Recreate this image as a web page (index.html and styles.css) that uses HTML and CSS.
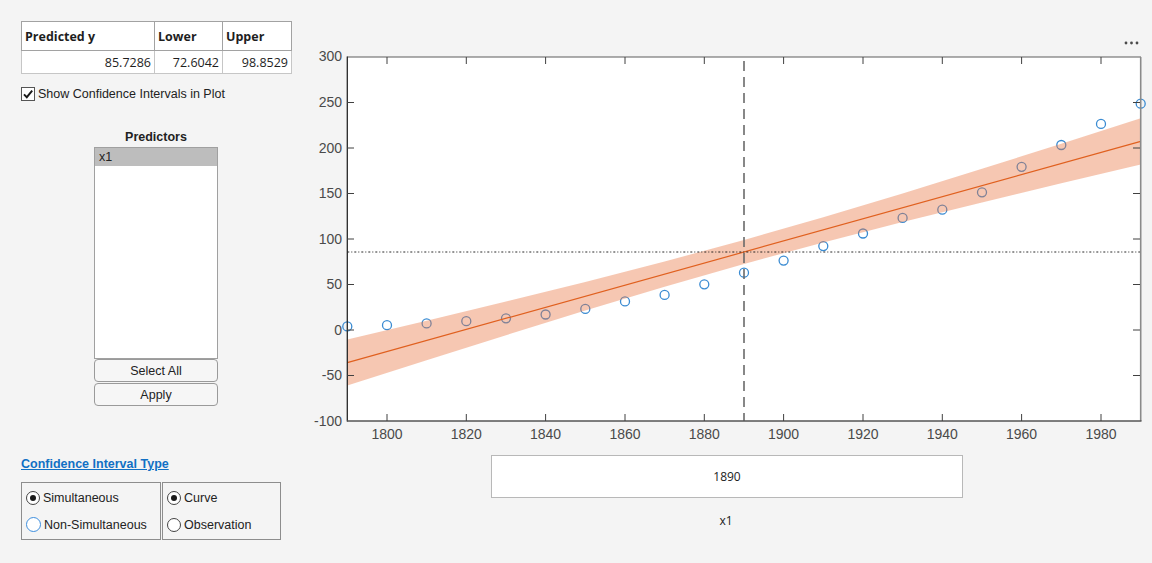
FILE: index.html
```html
<!DOCTYPE html>
<html>
<head>
  <title>Prediction Slice Plot</title>
  <link rel="stylesheet" href="styles.css">
</head>
<body>
<div class="app">

  <div class="side">
    <table class="pred-table">
      <tr><th class="c1">Predicted y</th><th class="c2">Lower</th><th class="c3">Upper</th></tr>
      <tr><td>85.7286</td><td>72.6042</td><td>98.8529</td></tr>
    </table>

    <div class="check-row">
      <span class="check">
        <svg width="12" height="12" viewBox="0 0 12 12"><path d="M2 6.3 L4.8 9.2 L10.2 2.6" fill="none" stroke="#1a1a1a" stroke-width="1.9"/></svg>
      </span>
      <span>Show Confidence Intervals in Plot</span>
    </div>

    <div class="predictors">
      <div class="pred-title">Predictors</div>
      <div class="listbox">
        <div class="list-item selected">x1</div>
      </div>
      <button class="btn">Select All</button>
      <button class="btn">Apply</button>
    </div>

    <div class="ci-title">Confidence Interval Type</div>
    <div class="ci-groups">
      <div class="ci-box left">
        <div class="radio-row"><span class="radio on"></span>Simultaneous</div>
        <div class="radio-row"><span class="radio focus"></span>Non-Simultaneous</div>
      </div>
      <div class="ci-box right">
        <div class="radio-row"><span class="radio on"></span>Curve</div>
        <div class="radio-row"><span class="radio"></span>Observation</div>
      </div>
    </div>
  </div>

  <div class="main">
    <svg class="plot" width="852" height="420" viewBox="300 30 852 420">
      <!-- axes background -->
      <rect x="347.3" y="57" width="793.4" height="364" fill="#fff"/>

      <!-- data -->
      <g fill="none" stroke="#3a8bd2" stroke-width="1.3">
        <circle cx="347.3" cy="326.4" r="4.5"/>
        <circle cx="387.0" cy="325.2" r="4.5"/>
        <circle cx="426.6" cy="323.4" r="4.5"/>
        <circle cx="466.3" cy="321.2" r="4.5"/>
        <circle cx="506.0" cy="318.3" r="4.5"/>
        <circle cx="545.6" cy="314.5" r="4.5"/>
        <circle cx="585.3" cy="308.9" r="4.5"/>
        <circle cx="625.0" cy="301.4" r="4.5"/>
        <circle cx="664.6" cy="294.9" r="4.5"/>
        <circle cx="704.3" cy="284.3" r="4.5"/>
        <circle cx="744.0" cy="272.7" r="4.5"/>
        <circle cx="783.6" cy="260.6" r="4.5"/>
        <circle cx="823.3" cy="246.1" r="4.5"/>
        <circle cx="863.0" cy="233.5" r="4.5"/>
        <circle cx="902.6" cy="217.9" r="4.5"/>
        <circle cx="942.3" cy="209.7" r="4.5"/>
        <circle cx="982.0" cy="192.3" r="4.5"/>
        <circle cx="1021.6" cy="166.8" r="4.5"/>
        <circle cx="1061.3" cy="145.0" r="4.5"/>
        <circle cx="1101.0" cy="123.9" r="4.5"/>
        <circle cx="1140.7" cy="103.7" r="4.5"/>
      </g>

      <!-- confidence band -->
      <polygon fill="#e8743f" fill-opacity="0.4"
        points="347.3,339.5 426.6,320.7 506.0,301.5 585.3,281.9 664.6,261.5 744.0,240.0 823.3,217.3 902.6,193.4 982.0,168.8 1061.3,143.7 1140.7,118.3
                1140.7,164.4 1061.3,183.3 982.0,202.4 902.6,222.1 823.3,242.4 744.0,263.9 664.6,286.7 585.3,310.5 506.0,335.2 426.6,360.2 347.3,385.6"/>

      <!-- fit -->
      <line x1="347.3" y1="362.6" x2="1140.7" y2="141.4" stroke="#e0601f" stroke-width="1.2"/>

      <!-- reference lines -->
      <line x1="347.3" y1="252" x2="1140.7" y2="252" stroke="#111" stroke-width="0.9" stroke-dasharray="2 2 1 2"/>
      <line x1="744" y1="61" x2="744" y2="421" stroke="#6a6a6a" stroke-width="1.6" stroke-dasharray="10 6"/>

      <!-- frame -->
      <line x1="347.3" y1="57" x2="1141" y2="57" stroke="#5c5c5c" stroke-width="1"/>
      <line x1="1140.7" y1="57" x2="1140.7" y2="421" stroke="#8a8a8a" stroke-width="1.6"/>
      <line x1="347.3" y1="56.5" x2="347.3" y2="421.5" stroke="#262626" stroke-width="1.3"/>
      <line x1="347" y1="421" x2="1141.5" y2="421" stroke="#555" stroke-width="1.4"/>

      <g stroke="#404040" stroke-width="1">
        <path d="M387 421v-7M466.3 421v-7M545.6 421v-7M625 421v-7M704.3 421v-7M783.6 421v-7M863 421v-7M942.3 421v-7M1021.6 421v-7M1101 421v-7"/>
        <path d="M387 57v7M466.3 57v7M545.6 57v7M625 57v7M704.3 57v7M783.6 57v7M863 57v7M942.3 57v7M1021.6 57v7M1101 57v7"/>
        <path d="M347 102.5h7M347 148h7M347 193.5h7M347 239h7M347 284.5h7M347 330h7M347 375.5h7"/>
        <path d="M1140 102.5h-7M1140 148h-7M1140 193.5h-7M1140 239h-7M1140 284.5h-7M1140 330h-7M1140 375.5h-7"/>
      </g>

      <g class="tick-label y-label">
        <text x="342" y="61">300</text>
        <text x="342" y="107">250</text>
        <text x="342" y="152.5">200</text>
        <text x="342" y="198">150</text>
        <text x="342" y="243.5">100</text>
        <text x="342" y="289">50</text>
        <text x="342" y="334.5">0</text>
        <text x="342" y="380">-50</text>
        <text x="342" y="426">-100</text>
      </g>
      <g class="tick-label x-label">
        <text x="387" y="439">1800</text>
        <text x="466.3" y="439">1820</text>
        <text x="545.6" y="439">1840</text>
        <text x="625" y="439">1860</text>
        <text x="704.3" y="439">1880</text>
        <text x="783.6" y="439">1900</text>
        <text x="863" y="439">1920</text>
        <text x="942.3" y="439">1940</text>
        <text x="1021.6" y="439">1960</text>
        <text x="1101" y="439">1980</text>
      </g>

      <!-- toolbar dots -->
      <g fill="#4a4a4a">
        <circle cx="1126" cy="43" r="1.4"/>
        <circle cx="1131.5" cy="43" r="1.4"/>
        <circle cx="1137" cy="43" r="1.4"/>
      </g>
    </svg>

    <div class="slider-box">1890</div>
    <div class="axis-name">x1</div>
  </div>

</div>
</body>
</html>
```

FILE: styles.css
```css
body {
  margin: 0;
  background-color: #f4f4f4;
  font-family: 'Liberation Sans', Arial, sans-serif;
  color: #222;
  font-size: 12.5px;
}

.app {
  display: flex;
  width: 1152px;
  height: 563px;
  overflow: hidden;
}

/* Left control panel */
.side {
  width: 279px;
  padding: 21px 0 0 21px;
}

.pred-table {
  border-collapse: collapse;
  background-color: #fff;
  font-family: 'Open Sans', 'Noto Sans', sans-serif;
  font-size: 12.5px;
  color: #1e1e1e;
  border: 1px solid #a2a2a2;
}
.pred-table th {
  text-align: left;
  font-weight: bold;
  height: 28px;
  padding: 0 3px;
  border: 1px solid #a2a2a2;
}
.pred-table td {
  text-align: right;
  height: 22px;
  padding: 0 3px;
  border: 1px solid #c6c6c6;
  border-top: none;
}
.pred-table .c1 { width: 126px; }
.pred-table .c2 { width: 61px; }
.pred-table .c3 { width: 62px; }

.check-row {
  display: flex;
  align-items: center;
  gap: 3px;
  margin-top: 12px;
  height: 16px;
}
.check {
  width: 12px;
  height: 12px;
  border: 1px solid #555;
  background-color: #fff;
  display: flex;
}

.predictors {
  width: 124px;
  margin-left: 73px;
  margin-top: 28px;
}
.pred-title {
  text-align: center;
  font-weight: bold;
  font-size: 12.5px;
  height: 17px;
}
.listbox {
  height: 210px;
  background-color: #fff;
  border: 1px solid #a0a0a0;
}
.list-item {
  height: 18px;
  line-height: 18px;
  padding-left: 4px;
  font-size: 12.5px;
}
.list-item.selected {
  background-color: #bdbdbd;
}
.btn {
  display: block;
  width: 124px;
  height: 23px;
  margin: 0 0 1px;
  background-color: #f6f6f6;
  border: 1px solid #9a9a9a;
  border-radius: 4px;
  font-family: 'Liberation Sans', Arial, sans-serif;
  font-size: 12.5px;
  color: #222;
  padding: 0;
}

.ci-title {
  margin-top: 51px;
  color: #1170c4;
  font-weight: bold;
  font-size: 12.5px;
  text-decoration: underline;
  height: 19px;
}
.ci-groups {
  display: flex;
  gap: 1px;
  margin-top: 6px;
}
.ci-box {
  height: 54px;
  border: 1px solid #8d8d8d;
  display: flex;
  flex-direction: column;
  justify-content: space-around;
  padding: 1px 4px;
}
.ci-box.left { width: 130px; }
.ci-box.right { width: 109px; }

.radio-row {
  display: flex;
  align-items: center;
  gap: 3px;
  height: 24px;
}
.radio {
  width: 12px;
  height: 12px;
  border: 1px solid #444;
  border-radius: 50%;
  background-color: #fff;
  display: flex;
  align-items: center;
  justify-content: center;
}
.radio.on::after {
  content: "";
  width: 6px;
  height: 6px;
  border-radius: 50%;
  background-color: #1a1a1a;
}
.radio.focus {
  border-color: #3d8ede;
  width: 13px;
  height: 13px;
}

/* Plot panel */
.main {
  flex: 1;
  display: flex;
  flex-direction: column;
  align-items: center;
}
.plot {
  display: block;
  margin-top: 30px;
}
.tick-label text {
  font-family: 'Liberation Sans', Arial, sans-serif;
  font-size: 14px;
  fill: #4a4a4a;
}
.y-label text { text-anchor: end; }
.x-label text { text-anchor: middle; }

.slider-box {
  margin-top: 5px;
  margin-left: 2px;
  width: 470px;
  height: 41px;
  line-height: 41px;
  background-color: #fff;
  border: 1px solid #b8b8b8;
  text-align: center;
  font-family: 'Open Sans', 'Noto Sans', sans-serif;
  font-size: 12px;
  color: #222;
}
.axis-name {
  margin-top: 14px;
  font-family: 'Open Sans', 'Noto Sans', sans-serif;
  font-size: 12px;
  color: #222;
}
```
